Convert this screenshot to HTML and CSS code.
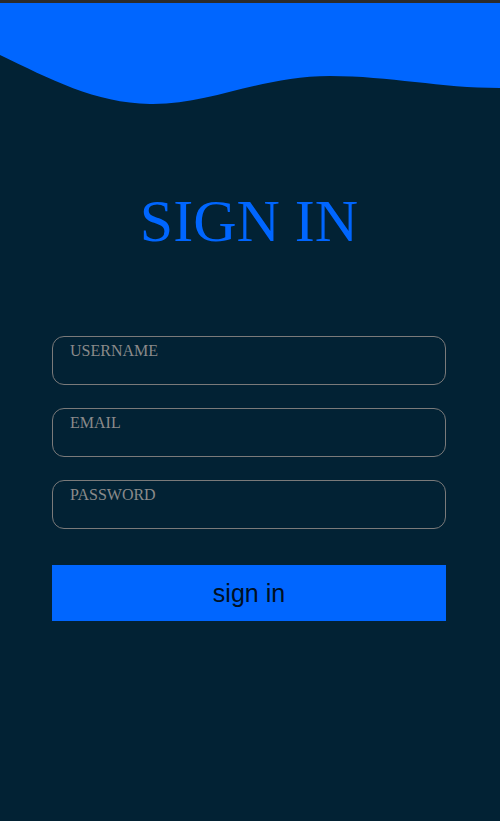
FILE: index.html
```html
<!DOCTYPE html>
<html>
<head>
<meta charset="utf-8">
<link rel="stylesheet" href="styles.css">
</head>
<body>
<div class="topbar"></div>
<svg class="wave" viewBox="0 0 500 102" width="500" height="102" preserveAspectRatio="none">
  <path d="M0,0 H500 V85 C440,85 390,73 330,73 C260,73 210,102 150,101 C95,100 50,76 0,52 Z" fill="#0066ff"/>
</svg>
<main class="page">
  <h1 class="title">SIGN IN</h1>
  <form class="form">
    <div class="field"><span class="label">USERNAME</span></div>
    <div class="field"><span class="label">EMAIL</span></div>
    <div class="field"><span class="label">PASSWORD</span></div>
    <button type="button" class="btn">sign in</button>
  </form>
</main>
</body>
</html>
```
FILE: styles.css
```css
html, body {
  margin: 0;
  padding: 0;
  background: #022234;
  height: 100%;
  overflow: hidden;
}
.topbar {
  height: 3px;
  background: #2b2b2b;
}
.wave {
  display: block;
}
.page {
  display: flex;
  flex-direction: column;
  align-items: center;
  padding-right: 2px;
}
.title {
  margin: 79px 0 0 0;
  font-family: "Liberation Serif", "Times New Roman", serif;
  font-weight: normal;
  font-size: 60px;
  line-height: 74px;
  height: 74px;
  color: #0066ff;
}
.form {
  margin-top: 78px;
  width: 394px;
  display: flex;
  flex-direction: column;
  gap: 23px;
}
.field {
  box-sizing: border-box;
  height: 49px;
  border: 1px solid #7a7a7a;
  border-radius: 12px;
  padding: 5px 17px 0;
}
.label {
  font-family: "Liberation Serif", "Times New Roman", serif;
  font-size: 16px;
  line-height: 18px;
  color: #8a8a8a;
}
.btn {
  margin-top: 13px;
  height: 56px;
  border: none;
  background: #0066ff;
  color: #001022;
  font-family: "Liberation Sans", Arial, sans-serif;
  font-size: 25px;
  padding: 0;
}
```
